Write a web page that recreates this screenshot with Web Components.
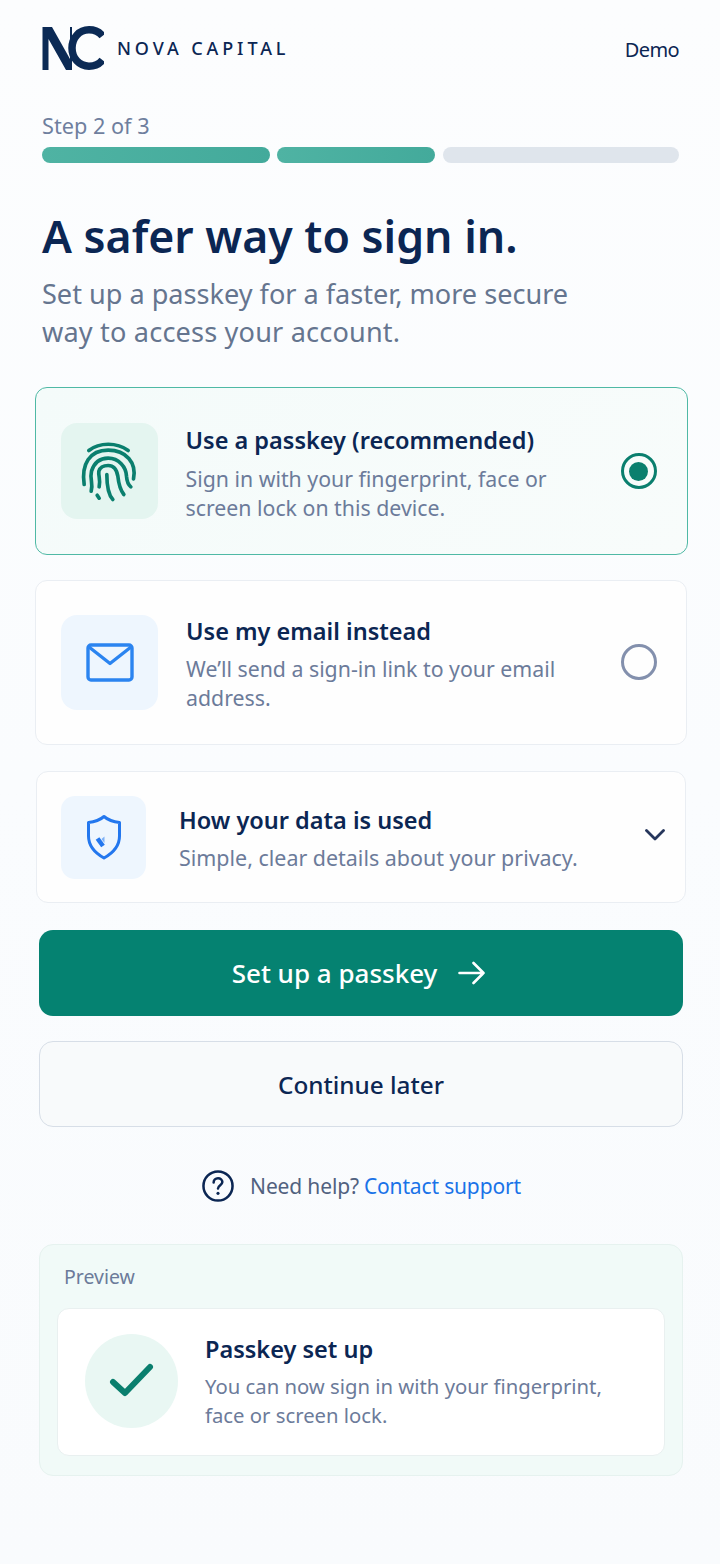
<!DOCTYPE html>
<html lang="en">
<head>
<meta charset="utf-8">
<title>Nova Capital</title>
<style>
    html, body {
        margin: 0;
        padding: 0;
    }
    body {
        width: 720px;
        height: 1564px;
        overflow: hidden;
        background: linear-gradient(180deg, #fcfdfe 0%, #fafcfe 50%, #f9fbfd 100%);
        font-family: "Noto Sans", sans-serif;
        color: #0b2653;
    }
</style>
</head>
<body>
<nc-header></nc-header>
<nc-progress label="Step 2 of 3"></nc-progress>
<nc-intro heading="A safer way to sign in.">Set up a passkey for a faster, more secure<br><span style="letter-spacing: 0.18px">way to access your account.</span></nc-intro>
<nc-option variant="selected" heading="Use a passkey (recommended)" radio="on">
    <svg slot="icon" width="60" height="66" viewBox="148.500 175.500 180 198" fill="none" stroke="#0a7f6e" stroke-width="11" stroke-linecap="round" stroke-linejoin="round">
        <path d="M178 213C210 188 262 188 296 213"/>
        <path d="M164 315C155 255 180 212 236 212C290 212 322 250 312 298"/>
        <path d="M185 335C192 310 180 300 186 275C194 250 212 236 236 236C268 236 290 262 291 290C292 305 295 315 304 322"/>
        <path d="M209 322C214 300 206 290 208 275C212 262 222 258 236 258C254 258 262 272 265 290C268 318 275 335 283 345"/>
        <path d="M232 285C232 320 236 345 250 360"/>
        <path d="M203 347L209 356"/>
    </svg>
    Sign in with your fingerprint, face or<br>screen lock on this device.
</nc-option>
<nc-option variant="plain" heading="Use my email instead" radio="off">
    <svg slot="icon" width="48" height="39" viewBox="0 0 48 39" fill="none" stroke="#2b84f0" stroke-width="3.400" stroke-linecap="round" stroke-linejoin="round">
        <rect x="2" y="2" width="44" height="35" rx="3"/>
        <path d="M3 4L24 20.500L45 4"/>
    </svg>
    We’ll send a sign-in link to your email<br>address.
</nc-option>
<nc-disclosure heading="How your data is used">
    <svg slot="icon" width="38" height="46" viewBox="0 0 38 46" fill="none" stroke="#2377ee" stroke-width="3" stroke-linecap="round" stroke-linejoin="round">
        <path d="M19 2.500C23 6 29 8 34.500 8.500V22C34.500 32 28 39 19 44C10 39 3.500 32 3.500 22V8.500C9 8 15 6 19 2.500Z"/>
        <path d="M12.500 24.500L18 32" stroke-width="4.500" stroke-linecap="butt"/>
        <path d="M19.500 22.500V29L16.500 25Z" fill="#7fb1f5" stroke="none"/>
    </svg>
    Simple, clear details about your privacy.
</nc-disclosure>
<nc-button variant="primary">Set up a passkey</nc-button>
<nc-button variant="secondary">Continue later</nc-button>
<nc-help></nc-help>
<nc-preview heading="Passkey set up">You can now sign in with your fingerprint,<br>face or screen lock.</nc-preview>

<script>
customElements.define("nc-header", class extends HTMLElement {
    constructor() {
        super();
        let shadowRoot = this.attachShadow({ mode: "open" });
        shadowRoot.innerHTML = `<style>
        :host {
            display: flex;
            align-items: center;
            justify-content: space-between;
            height: 44px;
            padding: 26px 41px 0 42px;
        }
        .brand {
            display: flex;
            align-items: center;
            gap: 13px;
        }
        .name {
            font-size: 18px;
            font-weight: 500;
            letter-spacing: 3.900px;
            white-space: nowrap;
            color: #0b2653;
        }
        .demo {
            font-size: 20px;
            letter-spacing: -0.6px;
            color: #0b2653;
            position: relative;
            top: 1px;
        }
        svg {
            display: block;
        }
        </style>
        <div class="brand">
            <svg width="62" height="44" viewBox="0 0 62 44">
                <path fill="#0b2a55" d="M0.500 1H10L28 33V1H30V44H24L6.500 13V44H0.500Z"/>
                <path fill="none" stroke="#0b2a55" stroke-width="7.500" d="M60.500 10C57 5.500 52 3.800 47 3.800C37 3.800 30 12 30 22C30 32 37 40.200 47 40.200C52 40.200 57 38.500 60.500 34"/>
            </svg>
            <span class="name">NOVA CAPITAL</span>
        </div>
        <span class="demo">Demo</span>`;
    }
});

customElements.define("nc-progress", class extends HTMLElement {
    constructor() {
        super();
        let shadowRoot = this.attachShadow({ mode: "open" });
        shadowRoot.innerHTML = `<style>
        :host {
            display: block;
            padding: 0 41px 0 42px;
            margin-top: 41px;
        }
        .label {
            font-size: 21.700px;
            line-height: 30px;
            color: #6f7f9e;
        }
        .bars {
            display: grid;
            grid-template-columns: 227.500px 158px 1fr;
            gap: 7.500px;
            margin-top: 6px;
        }
        .bar {
            height: 16px;
            border-radius: 8px;
            background: linear-gradient(90deg, #4fb3a3, #43aa9b);
        }
        .bar.todo {
            background: #dfe5ec;
        }
        </style>
        <div class="label"></div>
        <div class="bars">
            <div class="bar"></div>
            <div class="bar"></div>
            <div class="bar todo"></div>
        </div>`;
        shadowRoot.querySelector(".label").textContent = this.getAttribute("label");
    }
});

customElements.define("nc-intro", class extends HTMLElement {
    constructor() {
        super();
        let shadowRoot = this.attachShadow({ mode: "open" });
        shadowRoot.innerHTML = `<style>
        :host {
            display: block;
            padding: 0 42px;
            margin-top: 37px;
        }
        h1 {
            margin: 0;
            font-size: 44.600px;
            line-height: 72px;
            font-weight: 600;
            color: #0b2653;
            white-space: nowrap;
        }
        p {
            margin: 3px 0 0;
            font-size: 27.100px;
            line-height: 38px;
            color: #65758f;
            white-space: nowrap;
        }
        </style>
        <h1></h1>
        <p><slot></slot></p>`;
        shadowRoot.querySelector("h1").textContent = this.getAttribute("heading");
    }
});

customElements.define("nc-option", class extends HTMLElement {
    constructor() {
        super();
        let shadowRoot = this.attachShadow({ mode: "open" });
        let selected = this.getAttribute("variant") === "selected";
        shadowRoot.innerHTML = `<style>
        :host {
            display: flex;
            align-items: center;
            box-sizing: border-box;
            width: ${selected ? 653 : 652}px;
            height: ${selected ? 168 : 165}px;
            margin: ${selected ? 36 : 25}px 0 0 ${selected ? 34.5 : 35}px;
            padding: 0 ${selected ? 30 : 29}px 0 25px;
            border-radius: 12px;
            border: ${selected ? "1.5px solid #4fb9a5" : "1px solid #eaeef3"};
            background: ${selected ? "linear-gradient(135deg, #f4fbfa, #f8fcfb)" : "#fefefe"};
        }
        .tile {
            flex: none;
            display: flex;
            align-items: center;
            justify-content: center;
            width: 97px;
            height: ${selected ? 96 : 95}px;
            margin-bottom: ${selected ? 0 : 1}px;
            border-radius: 16px;
            background: ${selected ? "#e4f5f0" : "#eef6fe"};
        }
        .text {
            flex: 1;
            margin-left: 28px;
            padding-top: ${selected ? 4 : 1}px;
        }
        h2 {
            margin: 0;
            font-size: 23.500px;
            line-height: 32px;
            font-weight: 600;
            color: #0b2653;
        }
        p {
            margin: ${selected ? 8 : 7}px 0 0;
            font-size: 21.300px;
            line-height: 29px;
            color: #6c7b9a;
            white-space: nowrap;
        }
        .radio {
            flex: none;
            box-sizing: border-box;
            display: flex;
            align-items: center;
            justify-content: center;
            width: 36px;
            height: 36px;
            margin-bottom: ${selected ? 0 : 2}px;
            border-radius: 50%;
            border: 3px solid ${selected ? "#0a7f6e" : "#8390ad"};
        }
        .radio i {
            display: ${this.getAttribute("radio") === "on" ? "block" : "none"};
            width: 19px;
            height: 19px;
            border-radius: 50%;
            background: #0a7f6e;
        }
        </style>
        <div class="tile"><slot name="icon"></slot></div>
        <div class="text">
            <h2></h2>
            <p><slot></slot></p>
        </div>
        <div class="radio"><i></i></div>`;
        shadowRoot.querySelector("h2").textContent = this.getAttribute("heading");
    }
});

customElements.define("nc-disclosure", class extends HTMLElement {
    constructor() {
        super();
        let shadowRoot = this.attachShadow({ mode: "open" });
        shadowRoot.innerHTML = `<style>
        :host {
            display: flex;
            align-items: center;
            box-sizing: border-box;
            width: 650px;
            height: 132px;
            margin: 26px 0 0 36px;
            padding: 0 20px 0 24px;
            border-radius: 12px;
            border: 1px solid #eaeef3;
            background: #fefefe;
        }
        .tile {
            flex: none;
            display: flex;
            align-items: center;
            justify-content: center;
            width: 85px;
            height: 83px;
            border-radius: 14px;
            background: #eef6fe;
        }
        .text {
            flex: 1;
            margin-left: 33px;
            padding-top: 3px;
        }
        h2 {
            margin: 0;
            font-size: 23.500px;
            line-height: 32px;
            font-weight: 600;
            color: #0b2653;
        }
        p {
            margin: 6px 0 0;
            font-size: 21.450px;
            line-height: 32px;
            color: #6c7b9a;
            white-space: nowrap;
        }
        svg {
            flex: none;
            display: block;
            margin-bottom: 4px;
        }
        </style>
        <div class="tile"><slot name="icon"></slot></div>
        <div class="text">
            <h2></h2>
            <p><slot></slot></p>
        </div>
        <svg width="20" height="12" viewBox="0 0 20 12" fill="none" stroke="#26365c" stroke-width="2.800" stroke-linecap="round" stroke-linejoin="round">
            <path d="M1.500 1.500L10 10L18.500 1.500"/>
        </svg>`;
        shadowRoot.querySelector("h2").textContent = this.getAttribute("heading");
    }
});

customElements.define("nc-button", class extends HTMLElement {
    constructor() {
        super();
        let shadowRoot = this.attachShadow({ mode: "open" });
        let primary = this.getAttribute("variant") === "primary";
        shadowRoot.innerHTML = `<style>
        :host {
            display: flex;
            align-items: center;
            justify-content: center;
            gap: 21px;
            box-sizing: border-box;
            width: 644px;
            height: 86px;
            margin: ${primary ? 26.5 : 25.5}px 0 0 39px;
            padding-right: ${primary ? 5 : 0}px;
            border-radius: 14px;
            font-size: ${primary ? 26 : 24.3}px;
            font-weight: 500;
            color: ${primary ? "#ffffff" : "#0b2653"};
            background: ${primary ? "#058271" : "#f8fafb"};
            border: ${primary ? "none" : "1px solid #d7dee7"};
        }
        svg {
            display: ${primary ? "block" : "none"};
        }
        </style>
        <slot></slot>
        <svg width="27" height="24" viewBox="0 0 27 24" fill="none" stroke="#ffffff" stroke-width="2.600" stroke-linecap="round" stroke-linejoin="round">
            <path d="M1.500 12H25.500M15.500 2L25.500 12L15.500 22"/>
        </svg>`;
    }
});

customElements.define("nc-help", class extends HTMLElement {
    constructor() {
        super();
        let shadowRoot = this.attachShadow({ mode: "open" });
        shadowRoot.innerHTML = `<style>
        :host {
            display: flex;
            align-items: center;
            justify-content: center;
            height: 34px;
            margin-top: 42px;
            padding-left: 3px;
            font-size: 21px;
            letter-spacing: -0.15px;
            color: #51617f;
        }
        svg {
            display: block;
            margin-right: 16px;
        }
        a {
            color: #1a73e8;
            text-decoration: none;
            margin-left: 5px;
        }
        </style>
        <svg width="32" height="32" viewBox="0 0 33 33" fill="none" stroke="#0b2653" stroke-width="2.600" stroke-linecap="round" stroke-linejoin="round">
            <circle cx="16.500" cy="16.500" r="15"/>
            <path d="M12 13C12 10.200 14 8.500 16.500 8.500C19 8.500 21 10.200 21 12.500C21 15.500 16.500 15.800 16.500 19"/>
            <path d="M16.500 24V24.100" stroke-width="3.200"/>
        </svg>
        <span>Need help?</span><a href="#">Contact support</a>`;
    }
});

customElements.define("nc-preview", class extends HTMLElement {
    constructor() {
        super();
        let shadowRoot = this.attachShadow({ mode: "open" });
        shadowRoot.innerHTML = `<style>
        :host {
            display: block;
            box-sizing: border-box;
            width: 644px;
            height: 232px;
            margin: 41px 0 0 39px;
            padding: 18px 17px 0 17px;
            border-radius: 14px;
            border: 1px solid #e6f2ef;
            background: #f1faf8;
        }
        .label {
            font-size: 19.500px;
            line-height: 28px;
            padding-left: 7px;
            color: #6c7b9a;
        }
        .card {
            display: flex;
            align-items: center;
            box-sizing: border-box;
            height: 148px;
            margin-top: 17px;
            padding-left: 27px;
            border-radius: 12px;
            border: 1px solid #e9f0f0;
            background: #ffffff;
        }
        .circle {
            flex: none;
            display: flex;
            align-items: center;
            justify-content: center;
            width: 93px;
            height: 94px;
            margin-bottom: 2px;
            border-radius: 50%;
            background: #e9f7f3;
        }
        .text {
            margin: 0 0 2px 27px;
        }
        h2 {
            margin: 0;
            font-size: 23.500px;
            line-height: 32px;
            font-weight: 600;
            color: #0b2653;
        }
        p {
            margin: 7px 0 0;
            font-size: 20.300px;
            line-height: 29px;
            color: #6c7b9a;
            white-space: nowrap;
        }
        svg {
            display: block;
        }
        </style>
        <div class="label">Preview</div>
        <div class="card">
            <div class="circle">
                <svg width="46" height="36" viewBox="0 0 46 36" fill="none" stroke="#0a7f6e" stroke-width="6" stroke-linecap="round" stroke-linejoin="round">
                    <path d="M4 19L16 30L41 4"/>
                </svg>
            </div>
            <div class="text">
                <h2></h2>
                <p><slot></slot></p>
            </div>
        </div>`;
        shadowRoot.querySelector("h2").textContent = this.getAttribute("heading");
    }
});
</script>
</body>
</html>
